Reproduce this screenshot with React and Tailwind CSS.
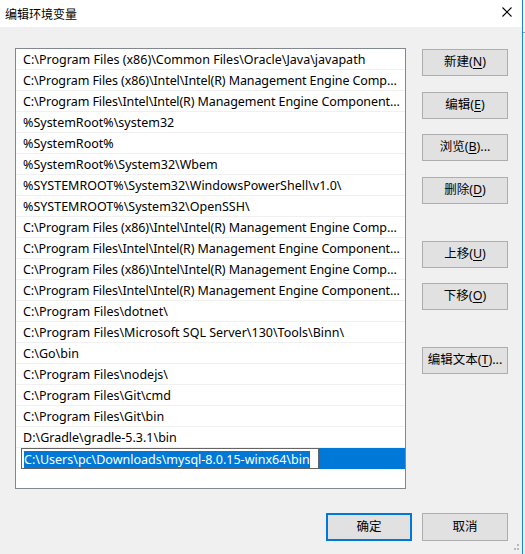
import React from "react";

const rows = [
  "C:\\Program Files (x86)\\Common Files\\Oracle\\Java\\javapath",
  "C:\\Program Files (x86)\\Intel\\Intel(R) Management Engine Comp...",
  "C:\\Program Files\\Intel\\Intel(R) Management Engine Component...",
  "%SystemRoot%\\system32",
  "%SystemRoot%",
  "%SystemRoot%\\System32\\Wbem",
  "%SYSTEMROOT%\\System32\\WindowsPowerShell\\v1.0\\",
  "%SYSTEMROOT%\\System32\\OpenSSH\\",
  "C:\\Program Files (x86)\\Intel\\Intel(R) Management Engine Comp...",
  "C:\\Program Files\\Intel\\Intel(R) Management Engine Component...",
  "C:\\Program Files (x86)\\Intel\\Intel(R) Management Engine Comp...",
  "C:\\Program Files\\Intel\\Intel(R) Management Engine Component...",
  "C:\\Program Files\\dotnet\\",
  "C:\\Program Files\\Microsoft SQL Server\\130\\Tools\\Binn\\",
  "C:\\Go\\bin",
  "C:\\Program Files\\nodejs\\",
  "C:\\Program Files\\Git\\cmd",
  "C:\\Program Files\\Git\\bin",
  "D:\\Gradle\\gradle-5.3.1\\bin",
];

function Btn({ label, m, suffix = "", className = "" }) {
  return (
    <div
      className={
        "h-[27px] w-[86px] shrink-0 flex items-center justify-center bg-[#e1e1e1] border border-[#adadad] text-[12.5px] text-black " +
        className
      }
    >
      <span>
        {label}
        {m && (
          <>
            (<span className="underline underline-offset-2">{m}</span>)
          </>
        )}
        {suffix}
      </span>
    </div>
  );
}

export default function App() {
  return (
    <div
      className="relative w-[525px] h-[554px] flex bg-[#f0f0f0] overflow-hidden"
      style={{ fontFamily: '"Noto Sans", "Noto Sans CJK SC", sans-serif' }}
    >
      <div className="w-[522px] h-full flex flex-col">
        <div className="h-[27px] bg-white flex items-center pl-[5px] text-[12px] text-black leading-none">
          <span style={{ fontFamily: '"Noto Sans CJK SC", sans-serif' }}>编辑环境变量</span>
        </div>
        <div className="flex-1 flex flex-col pl-[15px] pt-[21px]">
          <div className="flex">
            <div className="w-[391px] h-[441px] border border-[#828790] bg-white flex flex-col">
              {rows.map((r, i) => (
                <div
                  key={i}
                  className={
                    "h-[21px] shrink-0 border-b border-[#f0f0f0] pl-[7px] pt-[2px] flex items-center text-[12.5px] text-black whitespace-nowrap overflow-hidden " +
                    (r.endsWith("...") ? "tracking-[-0.1px]" : "")
                  }
                >
                  {r}
                </div>
              ))}
              <div className="h-[21px] shrink-0 flex">
                <div className="w-[5px] bg-white" />
                <div className="w-[298px] h-[21px] border border-[#646464] bg-white flex items-center pl-[2px] pt-[1px]">
                  <span className="bg-[#0078d7] text-white text-[12.5px] leading-[17px] whitespace-nowrap">
                    C:\Users\pc\Downloads\mysql-8.0.15-winx64\bin
                  </span>
                </div>
                <div className="flex-1 bg-[#0078d7]" />
              </div>
            </div>
            <div className="ml-[16px] flex flex-col pt-[1px]">
              <Btn label="新建" m="N" />
              <Btn label="编辑" m="E" className="mt-[16px]" />
              <Btn label="浏览" m="B" suffix="..." className="mt-[15px]" />
              <Btn label="删除" m="D" className="mt-[16px]" />
              <Btn label="上移" m="U" className="mt-[37px]" />
              <Btn label="下移" m="O" className="mt-[15px]" />
              <Btn label="编辑文本" m="T" suffix="..." className="mt-[37px]" />
            </div>
          </div>
          <div className="flex justify-end pr-[14px] mt-[24px] gap-[10px]">
            <div className="h-[28px] w-[86px] flex items-center justify-center bg-[#e1e1e1] border-2 border-[#0078d7] text-[12.5px] text-black">
              确定
            </div>
            <div className="h-[28px] w-[86px] flex items-center justify-center bg-[#e1e1e1] border border-[#adadad] text-[12.5px] text-black">
              取消
            </div>
          </div>
        </div>
      </div>
      <div className="w-[1px] h-full bg-[#1883d7]" />
      <div className="flex-1 h-full flex flex-col">
        <div className="h-[32px] bg-white" />
        <div className="flex-1 bg-[#f0f0f0] border-t border-[#9a9a9a]" />
      </div>

      <svg className="absolute left-[502px] top-[7px]" width="10" height="10" viewBox="0 0 10 10">
        <path d="M0.5 0.5 L9.5 9.5 M9.5 0.5 L0.5 9.5" stroke="#000" strokeWidth="1.1" fill="none" />
      </svg>
      <svg className="absolute left-[513px] top-[544px]" width="8" height="8" viewBox="0 0 8 8">
        <rect x="4" y="0" width="2" height="2" fill="#b8b8b8" />
        <rect x="1" y="4" width="2" height="2" fill="#b8b8b8" />
        <rect x="4" y="4" width="2" height="2" fill="#b8b8b8" />
      </svg>
    </div>
  );
}
